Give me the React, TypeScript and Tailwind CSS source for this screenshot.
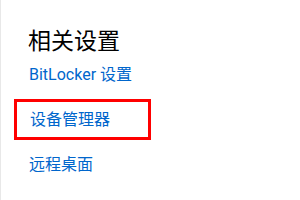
export default function App() {
  const font = { fontFamily: 'Roboto, "Noto Sans CJK SC", sans-serif' };
  return (
    <div className="w-[300px] h-[200px] bg-white border-l border-[#e8e8e8] overflow-hidden" style={font}>
      <div className="flex flex-col pl-[27px] pt-[26px]">
        <div className="text-[23px] leading-[32px] text-black">相关设置</div>
        <div className="mt-[5px] pl-[1px] text-[16px] leading-[24px] text-[#0066cc]">BitLocker 设置</div>
        <div className="mt-[12px] ml-[-14px] w-[137px] h-[41px] border-[3px] border-[#ff0000] pl-[13px] flex items-center text-[16px] text-[#0066cc]">
          设备管理器
        </div>
        <div className="mt-[13px] pl-[1px] text-[16px] leading-[24px] text-[#0066cc]">远程桌面</div>
      </div>
    </div>
  );
}
